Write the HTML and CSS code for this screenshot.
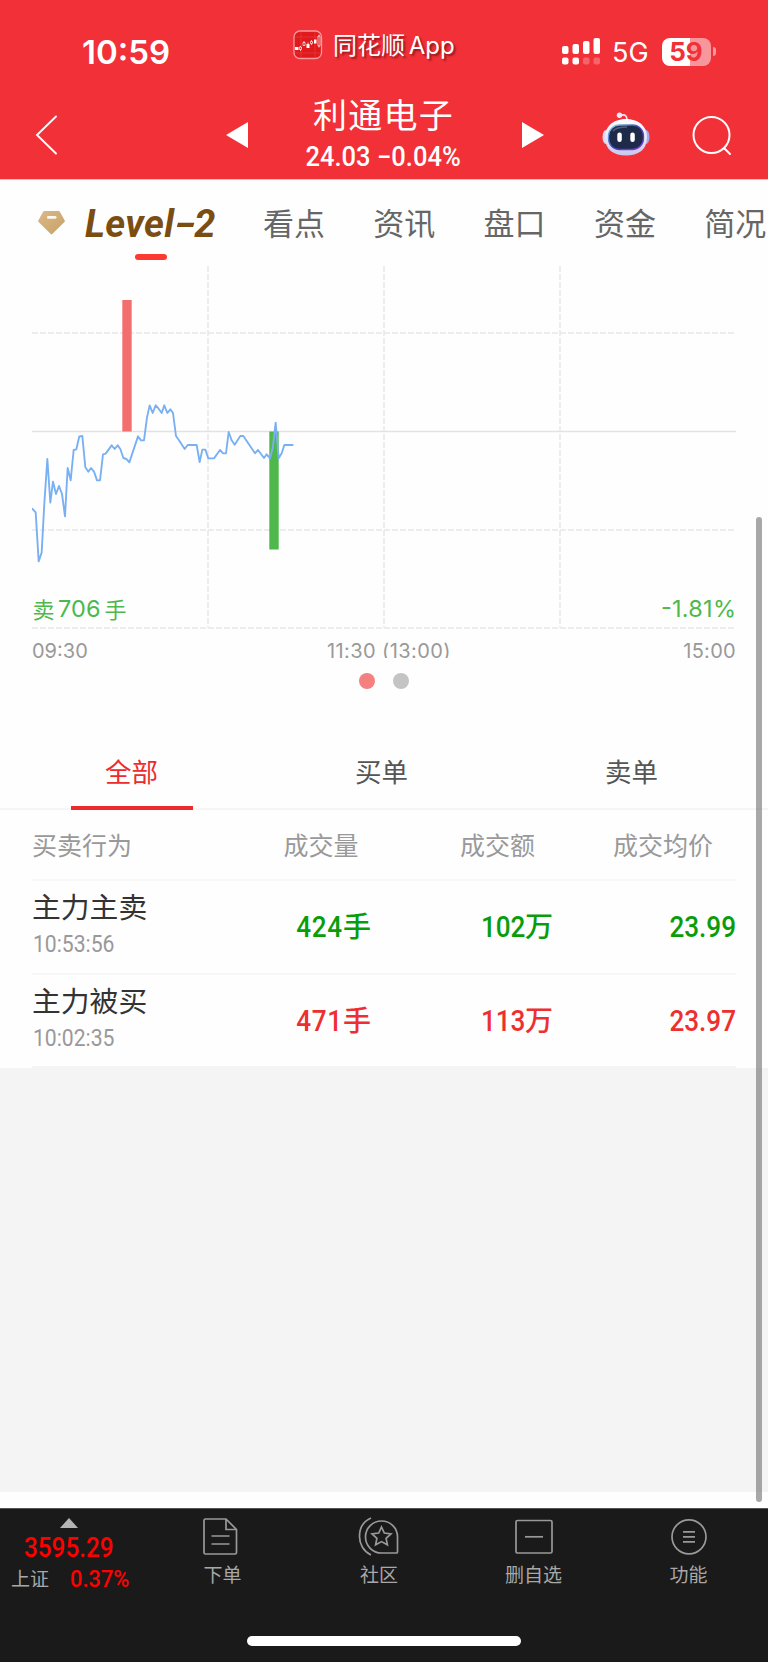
FILE: index.html
```
<!DOCTYPE html>
<html lang="zh-CN">
<head>
<meta charset="utf-8">
<title>利通电子</title>
<link rel="stylesheet" href="styles.css">
</head>
<body>
<header class="top">
  <div class="status">
    <span class="clock">10:59</span>
    <span class="app">
      <svg class="app-icon" width="30" height="30" viewBox="0 0 30 30">
        <rect x="1" y="1" width="27.5" height="27.5" rx="6" fill="#e01a1c" stroke="#f79a9c" stroke-width="1.3"/>
        <path d="M2 7h26M2 23h26M8 2v26M22 2v26" stroke="#e94a4c" stroke-width=".5"/>
        <path d="M2 17h3.500v3h-3.500zM13.500 14h3v4h-3zM21 9.500h2.500v4h-2.500z" fill="#fff"/>
        <path d="M6.500 17h2v2.500h-2zM10 12.500h2v3h-2zM17.500 11.500h2v2h-2zM25 6h2v10h-2zM7.500 16v1M7.500 19.500v1.500M11 11v1.500M18.500 10v1.500M18.500 13.500v1.500M15 12.500v2M26 4.500v1.500M26 16v1.500" fill="none" stroke="#fff" stroke-width=".7"/>
      </svg>
      <span class="app-name">同花顺 App</span>
    </span>
    <svg class="signal" width="40" height="28" viewBox="0 0 40 28" fill="#fff">
      <rect x="1" y="9" width="6.500" height="8" rx="2"/><rect x="11.500" y="7" width="6.500" height="10" rx="2"/><rect x="22" y="4" width="6.500" height="13" rx="2"/><rect x="32.500" y="1" width="6.500" height="16" rx="2"/>
      <rect x="1" y="20.500" width="6.500" height="7" rx="2"/><rect x="11.500" y="20.500" width="6.500" height="7" rx="2"/><rect x="22" y="20.500" width="6.500" height="7" rx="2" opacity=".25"/><rect x="32.500" y="20.500" width="6.500" height="7" rx="2" opacity=".25"/>
    </svg>
    <span class="net">5G</span>
    <span class="battery"><span class="cell">59</span><i class="cap"></i></span>
  </div>
  <div class="nav">
    <svg class="back" width="24" height="42" viewBox="0 0 24 42"><path d="M21 2.500 2 21l19 18.500" fill="none" stroke="#fff" stroke-width="1.900" stroke-linecap="round"/></svg>
    <svg class="prev" width="22" height="26" viewBox="0 0 22 26"><path d="M22 0v26L0 13z" fill="#fff"/></svg>
    <div class="title">
      <h1>利通电子</h1>
      <p><span class="din quote">24.03 −0.04%</span></p>
    </div>
    <svg class="next" width="22" height="26" viewBox="0 0 22 26"><path d="M0 0v26l22-13z" fill="#fff"/></svg>
    <svg class="robot" width="48" height="44" viewBox="0 0 48 44">
      <defs>
        <linearGradient id="shell" x1="0" y1="0" x2="0" y2="1"><stop offset="0" stop-color="#fff"/><stop offset=".6" stop-color="#dfe3fa"/><stop offset="1" stop-color="#c9c6ee"/></linearGradient>
        <linearGradient id="rim" x1="0" y1="0" x2="1" y2="1"><stop offset="0" stop-color="#8ad7ee"/><stop offset=".5" stop-color="#3d41b7"/><stop offset="1" stop-color="#8e3fd2"/></linearGradient>
      </defs>
      <path d="M18 3.500c5-1.500 7 0 7 4.500" fill="none" stroke="#e6e5f7" stroke-width="1.700"/>
      <circle cx="17.500" cy="3.300" r="2.700" fill="#e9e9f8"/>
      <ellipse cx="4" cy="25" rx="3.500" ry="7" fill="#d6d9f2"/><ellipse cx="44" cy="25" rx="3.500" ry="7" fill="#a9abe0"/>
      <path d="M24 7c11 0 21 6 21 18.500S36 43.500 24 43.500 3 38 3 25.500 13 7 24 7z" fill="url(#shell)"/>
      <rect x="6.500" y="13" width="35" height="24.500" rx="11" fill="#1e2a4a" stroke="url(#rim)" stroke-width="1.300"/>
      <path d="M11 19c3-4 9-4 14-4" stroke="#55617d" stroke-width="1.500" fill="none"/>
      <rect x="15.300" y="20.500" width="4.500" height="9.500" rx="2.200" fill="#fff"/><rect x="28.300" y="20.500" width="4.500" height="9.500" rx="2.200" fill="#fff"/>
    </svg>
    <svg class="search" width="42" height="42" viewBox="0 0 42 42" fill="none" stroke="#fff" stroke-width="2" stroke-linecap="round"><circle cx="20.500" cy="20" r="18"/><path d="M33.500 33.500l5.500 5.500"/></svg>
  </div>
</header>

<nav class="tabs">
  <svg class="gem" width="27" height="24" viewBox="0 0 27 24">
    <defs><linearGradient id="gold" x1="0" y1="0" x2="1" y2="1"><stop offset="0" stop-color="#dbb986"/><stop offset="1" stop-color="#c7a067"/></linearGradient></defs>
    <path d="M6.500 0h14q1 0 1.500.900l4.600 8.300q.6 1-.2 1.900L14.500 22.700q-1 1-2 0L.600 11.100q-.8-.9-.2-1.900L5 .9Q5.500 0 6.500 0z" fill="url(#gold)"/>
    <rect x="9" y="5" width="9.500" height="2.800" rx="1.200" fill="#fff" opacity=".9"/>
  </svg>
  <a class="level"><span class="level-text">Level<span class="dash">-</span>2</span></a>
  <a>看点</a><a>资讯</a><a>盘口</a><a>资金</a><a>简况</a>
</nav>

<main class="page">
  <svg class="chart" width="704" height="364" viewBox="32 266 704 364">
    <g stroke="#e8e8e8" stroke-width="1.500" stroke-dasharray="6 2">
      <path d="M208 266V628M384 266V628M560 266V628M32 333H736M32 530H736M32 628H736"/>
    </g>
    <path d="M32 431.500H736" stroke="#e2e2e2" stroke-width="1.300"/>
    <rect x="122.300" y="300" width="9.400" height="131.500" fill="#f36f6f"/>
    <rect x="269.300" y="431.500" width="9.400" height="118" fill="#4eb84c"/>
    <g transform="translate(20 260) scale(.33333)">
      <polyline fill="none" stroke="#79b0f3" stroke-width="5.600" stroke-linejoin="round" stroke-linecap="butt" points="36,745 47,757 56,904 65,878 73,730 82,597 91,728 99,665 108,702 117,678 126,702 135,769 143,624 152,661 161,570 169,568 178,529 187,528 196,622 205,635 213,624 222,635 231,661 240,661 249,583 257,581 275,556 284,567 293,556 301,567 310,594 319,597 328,607 354,529 363,541 372,541 381,472 389,436 398,459 407,436 416,446 425,459 433,436 442,459 451,448 459,459 468,528 477,541 494,567 503,555 530,555 539,606 547,569 556,569 565,595 582,595 600,570 609,580 618,580 626,516 635,541 644,554 661,528 670,528 705,580 714,570 732,594 740,583 750,595 758,565 767,488 776,595 785,580 793,555 820,555"/>
    </g>
    <g class="chart-label">
      <text x="32.500" y="617.500" font-size="22">卖</text>
      <text x="58" y="617" textLength="42.500" font-size="23.500">706</text>
      <text x="104.500" y="617.500" font-size="22">手</text>
      <text x="661" y="617" textLength="75" font-size="23.500">-1.81%</text>
    </g>
  </svg>
  <div class="axis"><span>09:30</span><span>11:30 (13:00)</span><span>15:00</span></div>
  <div class="dots"><i class="on"></i><i></i></div>

  <div class="filter"><a class="active">全部</a><a>买单</a><a>卖单</a></div>

  <section class="table">
    <div class="thead"><span>买卖行为</span><span>成交量</span><span>成交额</span><span>成交均价</span></div>
    <div class="row sell">
      <div class="who"><b>主力主卖</b><time class="din">10:53:56</time></div>
      <span class="val lots"><span class="din">424</span>手</span>
      <span class="val"><span class="din">102</span>万</span>
      <span class="val"><span class="din">23.99</span></span>
    </div>
    <div class="row buy">
      <div class="who"><b>主力被买</b><time class="din">10:02:35</time></div>
      <span class="val lots"><span class="din">471</span>手</span>
      <span class="val"><span class="din">113</span>万</span>
      <span class="val"><span class="din">23.97</span></span>
    </div>
  </section>
  <div class="empty"></div>
</main>

<footer class="bottom">
  <div class="index">
    <svg width="18" height="10" viewBox="0 0 18 10"><path d="M9 0l9 10H0z" fill="#b4b4b4"/></svg>
    <strong class="din">3595.29</strong>
    <div class="index-row"><span>上证</span><em class="din">0.37%</em></div>
  </div>
  <a class="item order"><svg width="40" height="40" viewBox="0 0 40 40"><path d="M4 4.500Q4 3 5.500 3H26l10.500 10.500V36.500q0 1.500-1.500 1.500H5.500Q4 38 4 36.500zM26 3v10.500h10.500M11.500 20h18M11.500 28h18"/></svg><span>下单</span></a>
  <a class="item community"><svg width="42" height="40" viewBox="0 0 42 40"><path d="M23.500 5c9 0 16 7 16 16V36q0 1-1 1H23.500a16 16 0 0 1 0-32zM13 2C5 5.500 1.500 13 1.500 20.500s4 15 11.500 18.500M23.500 11l2.800 6 6.700.800-4.900 4.500 1.300 6.500-5.900-3.200-5.900 3.200 1.300-6.500-4.900-4.500 6.700-.8z"/></svg><span>社区</span></a>
  <a class="item remove"><svg width="40" height="40" viewBox="0 0 40 40"><rect x="2" y="4.500" width="36" height="32.500" rx="1.500"/><path d="M11 20.800h18"/></svg><span>删自选</span></a>
  <a class="item"><svg width="40" height="40" viewBox="0 0 40 40"><circle cx="20" cy="20.800" r="17"/><path d="M14 15.800h12M14 20.800h12M14 25.800h12"/></svg><span>功能</span></a>
  <i class="home"></i>
</footer>
<i class="scrollbar"></i>
</body>
</html>
```
FILE: styles.css
```
* { box-sizing: border-box; margin: 0; padding: 0; }
body {
  position: relative;
  width: 768px;
  height: 1663px;
  overflow: hidden;
  background: #fefefe;
  color: #333;
  font-family: Inter, "Noto Sans CJK SC", sans-serif;
}
svg { display: block; flex: none; }
a, span { white-space: nowrap; }
i, em, b { font-style: normal; }

.din {
  display: inline-block;
  font-family: Roboto, "Noto Sans CJK SC", sans-serif;
  font-weight: 500;
  transform: scaleX(.9);
}

.top { height: 179px; background: #f23038; color: #fff; }
.status { display: flex; height: 90px; padding-top: 26px; }
.clock { width: 212px; padding-left: 82px; font-size: 33px; font-weight: 600; line-height: 52px; }
.app { display: flex; flex: none; width: 267px; padding-left: 81px; gap: 10px; align-items: center; height: 38px; }
.app-icon { margin-top: -1px; }
.app-name { font-size: 24px; line-height: 38px; word-spacing: -3px; padding-top: 1px; text-shadow: 2px 2px 2px rgba(60, 0, 0, .5); }
.signal { margin: 10.500px 0 0 81.500px; }
.net { flex: none; width: 61px; padding-left: 11.500px; font-size: 27px; line-height: 53px; }
.battery { display: flex; align-items: center; height: 51px; }
.cell {
  width: 49px;
  height: 28px;
  border-radius: 8px;
  background: linear-gradient(90deg, #fff 58%, #f8979b 58%);
  color: #f23038;
  font-size: 26px;
  font-weight: 700;
  line-height: 28px;
  text-align: center;
}
.cap { width: 3px; height: 9px; margin-left: 2px; border-radius: 0 3px 3px 0; background: #f8979b; }
.nav { display: flex; height: 88px; }
.back { margin: 24px 0 0 35px; }
.prev { margin: 32px 0 0 167px; }
.title { flex: none; width: 275px; padding: 5px 4px 0 0; text-align: center; }
.title h1 { font-size: 34px; font-weight: 400; letter-spacing: 1.200px; line-height: 42px; }
.title p { padding-top: 2px; line-height: 36px; }
.quote { font-size: 27px; line-height: 36px; transform: scaleX(.945); }
.next { margin: 32px 0 0 -1px; }
.robot { margin: 22px 0 0 58px; }
.search { margin: 25px 0 0 41px; }

.tabs { display: flex; height: 87px; padding: 20px 0 0 38px; border-top: 1px solid #fbb; overflow: hidden; }
.gem { margin-top: 11px; }
.tabs a { flex: none; width: 110.300px; font-size: 31px; line-height: 48px; color: #666; }
.tabs .level { position: relative; width: 198px; padding-left: 20px; }
.level-text {
  display: inline-block;
  color: #7b4d12;
  font-family: Roboto, sans-serif;
  font-size: 38px;
  font-weight: 700;
  font-style: italic;
  letter-spacing: .3px;
}
.dash { display: inline-block; width: 20px; transform: scaleX(1.600); transform-origin: left; }
.level::after { content: ""; position: absolute; left: 70px; top: 54px; width: 32px; height: 6px; border-radius: 3px; background: #fc3a30; }

.chart { margin-left: 32px; }
.chart-label { fill: #4eb84c; font-family: Inter, "Noto Sans CJK SC", sans-serif; }
.axis { display: grid; grid-template-columns: 290px 1fr 150px; height: 28px; padding: 7px 32px 0; overflow: hidden; color: #999; font-size: 20px; line-height: 28px; }
.axis span:nth-child(2) { padding-left: 5px; letter-spacing: .4px; }
.axis span:nth-child(3) { text-align: right; letter-spacing: .3px; }
.dots { display: flex; gap: 18.500px; padding: 14.500px 0 0 358.500px; height: 68px; }
.dots i { width: 16px; height: 16px; border-radius: 50%; background: #c4c4c4; }
.dots .on { background: #f48080; }

.filter { display: flex; height: 84px; padding-left: 6.500px; border-bottom: 2px solid #f5f5f5; }
.filter a { position: relative; width: 250px; padding-top: 22px; text-align: center; font-size: 26.500px; line-height: 48px; color: #555; }
.filter .active { color: #ed2b2d; }
.filter .active::after { content: ""; position: absolute; left: 64px; bottom: -2px; width: 122px; height: 4px; background: #ed2b2d; }

.table { padding: 0 32px; }
.thead { display: grid; grid-template-columns: 251.500px 176.500px 153px auto; height: 70.500px; border-bottom: 2px solid #f7f7f7; font-size: 25px; line-height: 72px; color: #999; }
.row { display: grid; grid-template-columns: 160px 179px 182px 183px; height: 94.200px; border-bottom: 2px solid #f7f7f7; }
.row:last-child { height: 93.500px; border-bottom-color: #f4f4f4; }
.who { padding-top: 7.500px; }
.who b { display: block; font-size: 28.800px; font-weight: 400; line-height: 40px; color: #333; }
.who time { padding-left: 1px; font-size: 23.500px; font-weight: 400; line-height: 32px; color: #999; transform-origin: left; }
.val { text-align: right; font-size: 28px; font-weight: 500; line-height: 93px; }
.val .din { font-size: 29px; transform-origin: right; }
.lots .din { letter-spacing: .8px; }
.sell .val { color: #0a9d0a; }
.buy .val { color: #ee2f30; }
.empty { height: 424px; background: #f4f4f4; }

.bottom { position: absolute; left: 0; top: 1508px; width: 768px; height: 154px; display: flex; background: #1a1a1a; border-top: 1px solid #555; color: #a8a8a8; }
.index { flex: none; width: 138px; padding-top: 9px; display: flex; flex-direction: column; align-items: center; }
.index strong { color: #f00; font-size: 27px; line-height: 40px; }
.index-row { display: flex; width: 138px; margin-top: -2px; padding-left: 11px; font-size: 19px; line-height: 28px; }
.index-row em { margin-left: 21px; color: #f00; font-size: 23.500px; line-height: 26px; transform: scaleX(.93); transform-origin: left; }
.item { flex: none; width: 155px; display: flex; flex-direction: column; align-items: center; padding-top: 7px; font-size: 19px; }
.item.order { width: 164px; }
.item.order span { padding-left: 5px; }
.item svg { fill: none; stroke: #999; stroke-width: 1.700; }
.item span { line-height: 39px; }
.item.community { width: 154px; }
.home { position: absolute; left: 247px; top: 127px; width: 274px; height: 10px; border-radius: 5px; background: #fff; }
.scrollbar { position: absolute; left: 756px; top: 517px; width: 6px; height: 985px; border-radius: 3px; background: rgba(110, 110, 110, .6); }
```
